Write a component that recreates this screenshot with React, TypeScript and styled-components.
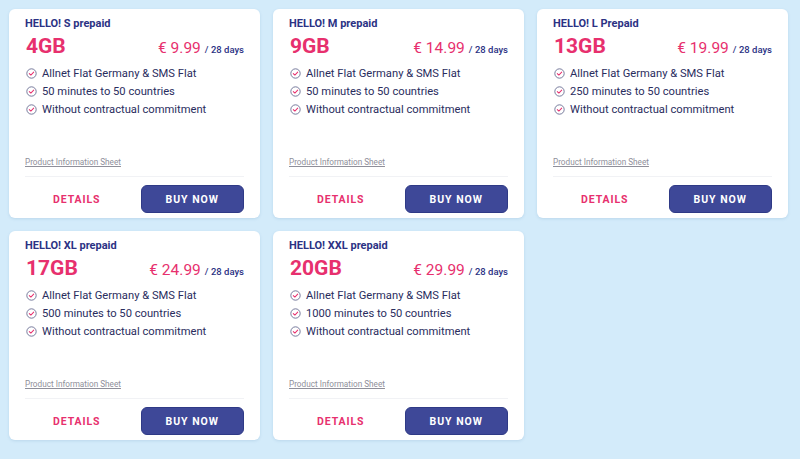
import React from "react";
import styled, { createGlobalStyle } from "styled-components";

const Global = createGlobalStyle`
  html, body { margin: 0; padding: 0; background: #d3ebfa; }
  body { font-family: Roboto, "Noto Sans", Arial, sans-serif; -webkit-font-smoothing: antialiased; }
  * { box-sizing: border-box; }
`;

const Page = styled.div`
  width: 800px;
  height: 459px;
  padding: 9px 11px 9px 9px;
  display: grid;
  grid-template-columns: repeat(3, 251px);
  grid-auto-rows: min-content;
  column-gap: 13px;
  row-gap: 13px;
  background: #d3ebfa;
`;

const Card = styled.div`
  background: #fff;
  border-radius: 6px;
  box-shadow: 0 1px 3px rgba(80, 130, 170, 0.18);
  padding: 8px 16px 5px 16px;
  display: flex;
  flex-direction: column;
`;

const Title = styled.div`
  font-size: 11px;
  line-height: 14px;
  font-weight: 700;
  color: #2b3284;
`;

const Head = styled.div`
  margin-top: 3px;
  display: flex;
  align-items: baseline;
  justify-content: space-between;
  height: 24px;
`;

const Volume = styled.div`
  font-size: 21px;
  line-height: 24px;
  font-weight: 700;
  color: #e7306e;
  padding-left: 1px;
`;

const Price = styled.div`
  display: flex;
  align-items: baseline;
  gap: 4px;
`;

const Amount = styled.span`
  font-size: 15.5px;
  color: #e7306e;
  font-weight: 400;
`;

const Period = styled.span`
  font-size: 9.5px;
  color: #2b3284;
  font-weight: 500;
`;

const Features = styled.ul`
  list-style: none;
  margin: 6px 0 0 0;
  padding: 0;
`;

const Feature = styled.li`
  display: flex;
  align-items: center;
  gap: 5px;
  height: 18px;
  font-size: 11.2px;
  color: #2a2d5e;
  padding-left: 1px;
`;

const InfoLink = styled.a`
  margin-top: 39px;
  font-size: 8.2px;
  line-height: 10px;
  color: #8f8f9a;
  text-decoration: underline;
`;

const Divider = styled.div`
  margin-top: 9px;
  height: 1px;
  background: #f1f2f5;
`;

const Actions = styled.div`
  margin-top: 8px;
  display: grid;
  grid-template-columns: 1fr 1fr;
  column-gap: 12px;
`;

const TextButton = styled.button`
  height: 28px;
  border: none;
  background: none;
  font-family: inherit;
  font-size: 10.5px;
  font-weight: 700;
  letter-spacing: 0.9px;
  color: #e7306e;
  padding: 0;
`;

const BuyButton = styled.button`
  height: 28px;
  border-radius: 6px;
  border: 1px solid #2f3a86;
  background: #3e4898;
  font-family: inherit;
  font-size: 10.5px;
  font-weight: 700;
  letter-spacing: 1px;
  color: #fff;
  padding: 0;
`;

const Check = () => (
  <svg width="11" height="11" viewBox="0 0 12 12" style={{ flex: "none" }}>
    <circle cx="6" cy="6" r="5.1" fill="none" stroke="#6a6f93" strokeWidth="1" />
    <path d="M3.6 6.1 L5.3 7.7 L8.4 4.5" fill="none" stroke="#e7306e" strokeWidth="1.1" strokeLinecap="round" strokeLinejoin="round" />
  </svg>
);

type Plan = { name: string; gb: string; price: string; minutes: string };

const plans: Plan[] = [
  { name: "HELLO! S prepaid", gb: "4GB", price: "€ 9.99", minutes: "50 minutes to 50 countries" },
  { name: "HELLO! M prepaid", gb: "9GB", price: "€ 14.99", minutes: "50 minutes to 50 countries" },
  { name: "HELLO! L Prepaid", gb: "13GB", price: "€ 19.99", minutes: "250 minutes to 50 countries" },
  { name: "HELLO! XL prepaid", gb: "17GB", price: "€ 24.99", minutes: "500 minutes to 50 countries" },
  { name: "HELLO! XXL prepaid", gb: "20GB", price: "€ 29.99", minutes: "1000 minutes to 50 countries" },
];

export default function App() {
  return (
    <>
      <Global />
      <Page>
        {plans.map((p) => (
          <Card key={p.name}>
            <Title>{p.name}</Title>
            <Head>
              <Volume>{p.gb}</Volume>
              <Price>
                <Amount>{p.price}</Amount>
                <Period>/ 28 days</Period>
              </Price>
            </Head>
            <Features>
              {["Allnet Flat Germany & SMS Flat", p.minutes, "Without contractual commitment"].map((f) => (
                <Feature key={f}>
                  <Check />
                  {f}
                </Feature>
              ))}
            </Features>
            <InfoLink>Product Information Sheet</InfoLink>
            <Divider />
            <Actions>
              <TextButton>DETAILS</TextButton>
              <BuyButton>BUY NOW</BuyButton>
            </Actions>
          </Card>
        ))}
      </Page>
    </>
  );
}
